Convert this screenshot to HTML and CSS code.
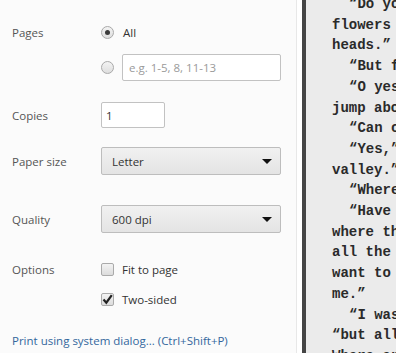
FILE: index.html
```html
<!DOCTYPE html>
<html lang="en">
<head>
    <meta charset="UTF-8">
    <meta name="viewport" content="width=device-width, initial-scale=1.0">
    <title>Print</title>
    <link rel="stylesheet" href="styles.css">
</head>
<body>

    <div class="settings">
        <div class="field first">
            <span class="label">Pages</span>
            <label class="choice">
                <input type="radio" name="pages" checked>
                <span>All</span>
            </label>
        </div>
        <div class="field range">
            <span class="label"></span>
            <input type="radio" name="pages">
            <input type="text" class="pages-input" placeholder="e.g. 1-5, 8, 11-13">
        </div>

        <div class="field copies">
            <span class="label">Copies</span>
            <input type="text" class="copies-input" value="1">
        </div>

        <div class="field paper">
            <span class="label">Paper size</span>
            <div class="select">
                <span>Letter</span>
                <span class="arrow"></span>
            </div>
        </div>

        <div class="field quality">
            <span class="label">Quality</span>
            <div class="select">
                <span>600 dpi</span>
                <span class="arrow"></span>
            </div>
        </div>

        <div class="field options">
            <span class="label">Options</span>
            <label class="choice">
                <span class="checkbox"></span>
                <span>Fit to page</span>
            </label>
        </div>
        <div class="field twosided">
            <span class="label"></span>
            <label class="choice">
                <span class="checkbox">
                    <svg width="11" height="11" viewBox="0 0 11 11">
                        <path d="M1.5 5.6 L4.3 8.7 L9.8 1.2" fill="none" stroke="#222" stroke-width="2.2"/>
                    </svg>
                </span>
                <span>Two-sided</span>
            </label>
        </div>

        <div class="field link-row">
            <a href="#" class="system-link">Print using system dialog... (Ctrl+Shift+P)</a>
        </div>
    </div>

    <div class="preview">
        <div class="page">
            <div class="text">
                <div class="line indent">“Do you ever see them</div>
                <div class="line">flowers nodding their</div>
                <div class="line">heads.”</div>
                <div class="line indent">“But from here</div>
                <div class="line indent">“O yes, and I</div>
                <div class="line">jump about them</div>
                <div class="line indent">“Can climb</div>
                <div class="line indent">“Yes,” said the</div>
                <div class="line">valley.”</div>
                <div class="line indent">“Where is it</div>
                <div class="line indent">“Have you seen</div>
                <div class="line">where the river</div>
                <div class="line">all the fields</div>
                <div class="line">want to go with</div>
                <div class="line">me.”</div>
                <div class="line indent">“I was there</div>
                <div class="line">“but all of them</div>
                <div class="line">Where are they</div>
            </div>
        </div>
    </div>

</body>
</html>
```

FILE: styles.css
```css
body {
    margin: 0;
    padding: 0;
    display: flex;
    height: 353px;
    overflow: hidden;
    background-color: #ffffff;
    font-family: 'Open Sans', 'Liberation Sans', sans-serif;
    font-size: 11.5px;
    color: #333;
}

.settings {
    width: 284px;
    padding-left: 12px;
    background-color: #fbfbfb;
    border-right: 1px solid #e8e8e8;
    flex-shrink: 0;
}

.field {
    display: flex;
    align-items: center;
}

.label {
    width: 89px;
    flex-shrink: 0;
    color: #555;
}

/* vertical rhythm of the rows */
.first { height: 20px; margin-top: 22px; }
.range { height: 27px; margin-top: 12px; }
.copies { height: 26px; margin-top: 21px; }
.paper { height: 28px; margin-top: 19px; }
.quality { height: 28px; margin-top: 30px; }
.options { height: 20px; margin-top: 26px; }
.twosided { height: 20px; margin-top: 10px; }
.link-row { height: 20px; margin-top: 21px; }

.choice {
    display: flex;
    align-items: center;
    gap: 8px;
    color: #333;
}

input[type="radio"] {
    appearance: none;
    -webkit-appearance: none;
    margin: 0;
    width: 13px;
    height: 13px;
    border: 1px solid #a9a9a9;
    border-radius: 50%;
    background: linear-gradient(#f3f3f3, #dedede);
    box-sizing: border-box;
    display: flex;
    align-items: center;
    justify-content: center;
}

    input[type="radio"]:checked::after {
        content: "";
        width: 5px;
        height: 5px;
        border-radius: 50%;
        background-color: #3a3a3a;
    }

.choice input[type="radio"] {
    margin-right: 1px;
}

.range input[type="radio"] {
    margin-right: 8px;
}

.pages-input,
.copies-input {
    height: 27px;
    box-sizing: border-box;
    border: 1px solid #c2c2c2;
    border-radius: 2px;
    background: #fff;
    font-family: inherit;
    font-size: 11.5px;
    color: #333;
    outline: none;
    margin: 0;
}

.pages-input {
    width: 159px;
    padding: 0 6px;
}

    .pages-input::placeholder {
        color: #9a9a9a;
    }

.copies-input {
    width: 64px;
    height: 26px;
    padding: 0 4px;
}

.select {
    width: 180px;
    height: 28px;
    box-sizing: border-box;
    border: 1px solid #bdbdbd;
    border-radius: 2px;
    background: linear-gradient(#f1f1f1, #e4e4e4);
    display: flex;
    align-items: center;
    justify-content: space-between;
    padding: 0 8px 0 10px;
    color: #333;
}

.arrow {
    width: 0;
    height: 0;
    border-left: 5px solid transparent;
    border-right: 5px solid transparent;
    border-top: 5px solid #111;
}

.checkbox {
    width: 13px;
    height: 13px;
    box-sizing: border-box;
    border: 1px solid #aaa;
    border-radius: 2px;
    background: linear-gradient(#f3f3f3, #dcdcdc);
    display: flex;
    align-items: center;
    justify-content: center;
}

.system-link {
    color: #33679d;
    text-decoration: none;
}

.preview {
    flex: 1;
    display: flex;
    padding-left: 5px;
    background-color: #ffffff;
}

.page {
    flex: 1;
    background-color: #ebebeb;
    border-left: 4px solid #454545;
    overflow: hidden;
    padding-left: 26px;
}

.text {
    margin-top: -6px;
    font-family: 'Liberation Mono', 'Courier New', monospace;
    font-size: 14px;
    font-weight: bold;
    line-height: 20.7px;
    color: #2a2a2a;
    white-space: nowrap;
}

.indent {
    padding-left: 17px;
}
```
